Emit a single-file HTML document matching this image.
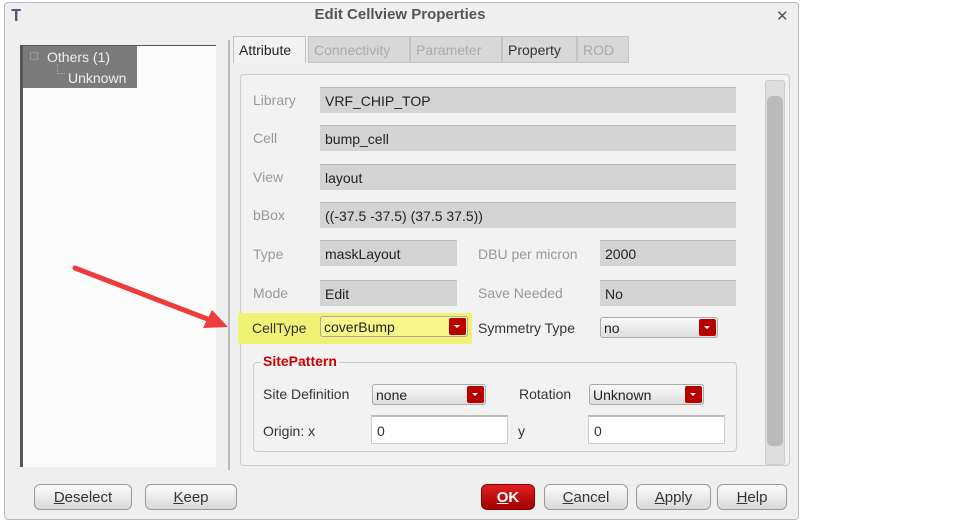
<!DOCTYPE html>
<html><head><style>
*{box-sizing:border-box;margin:0;padding:0}
body{width:963px;height:524px;background:#fff;font-family:"Liberation Sans","DejaVu Sans",sans-serif;font-size:14px;color:#333;position:relative;overflow:hidden}
.a{position:absolute}
.dlg{left:4px;top:2px;width:795px;height:518px;background:#efefef;border:1px solid #bbb;border-radius:4px}
.lbl{position:absolute;color:#999;font-size:14px}
.lbl.d{color:#333}
.fld{position:absolute;background:#d4d4d4;border-top:1px solid #bbb;height:26px;padding:5px 5px;font-size:14px;color:#222}
.inp{position:absolute;background:#fff;border:1px solid #ccc;border-top:2px solid #bbb;height:29px;padding:6px 5px;font-size:14px}
.dd{position:absolute;height:21px;background:linear-gradient(#fafafa,#ddd);border:1px solid #aaa;border-radius:3px;padding:2px 3px;font-size:14px;color:#222}
.dd b{position:absolute;right:1px;top:1px;width:17px;height:17px;background:#b80000;border-radius:2px}
.dd b:after{content:"";position:absolute;left:5px;top:7px;border:3px solid transparent;border-top:3px solid #fff}
.btn{position:absolute;top:484px;height:26px;background:linear-gradient(#fdfdfd,#d8d8d8);border:1px solid #999;border-radius:6px;text-align:center;padding-top:4px;font-size:15px;color:#333}
.tab{position:absolute;top:36px;height:27px;background:#d8d8d8;border:1px solid #c4c4c4;padding:5px 5px;color:#aaa;font-size:14px}
</style></head><body>
<div class="a dlg"></div>
<div class="a" style="left:11px;top:8px;font-size:16px;color:#557;">&#x1D413;</div>
<div class="a" style="left:0;top:6px;width:800px;text-align:center;font-weight:bold;color:#555;font-size:15px">Edit Cellview Properties</div>
<div class="a" style="left:776px;top:7px;font-weight:bold;color:#555;font-size:15px">✕</div>
<!-- left panel -->
<div class="a" style="left:20px;top:45px;width:196px;height:422px;background:#fcfcfc;border-left:3px solid #555;border-top:1px solid #555"></div>
<div class="a" style="left:23px;top:46px;width:114px;height:42px;background:#7b7b7b"></div>
<div class="a" style="left:30px;top:52px;width:8px;height:8px;border:1px solid #999"></div>
<div class="a" style="left:47px;top:49px;color:#eee;font-size:14px">Others (1)</div>
<div class="a" style="left:57px;top:64px;width:8px;height:10px;border-left:1px dotted #aaa;border-bottom:1px dotted #aaa"></div>
<div class="a" style="left:68px;top:70px;color:#eee;font-size:14px">Unknown</div>
<div class="a" style="left:228px;top:40px;width:2px;height:430px;background:#bbb"></div>
<!-- tabs -->
<div class="tab" style="left:233px;width:73px;background:#f2f2f2;color:#222;border-bottom:none">Attribute</div>
<div class="tab" style="left:308px;width:102px">Connectivity</div>
<div class="tab" style="left:410px;width:92px">Parameter</div>
<div class="tab" style="left:502px;width:75px;color:#333">Property</div>
<div class="tab" style="left:577px;width:52px">ROD</div>
<div class="a" style="left:240px;top:74px;width:550px;height:392px;border:1px solid #ccc;border-radius:4px;background:#f2f2f2"></div>
<!-- scrollbar -->
<div class="a" style="left:765px;top:80px;width:20px;height:385px;background:#ddd;border:1px solid #ccc;border-radius:3px"></div>
<div class="a" style="left:767px;top:96px;width:16px;height:350px;background:#bbb;border-radius:5px"></div>
<!-- fields -->
<div class="lbl" style="left:253px;top:92px">Library</div><div class="fld" style="left:320px;top:87px;width:416px">VRF_CHIP_TOP</div>
<div class="lbl" style="left:253px;top:130px">Cell</div><div class="fld" style="left:320px;top:125px;width:416px">bump_cell</div>
<div class="lbl" style="left:253px;top:169px">View</div><div class="fld" style="left:320px;top:164px;width:416px">layout</div>
<div class="lbl" style="left:253px;top:207px">bBox</div><div class="fld" style="left:320px;top:202px;width:416px">((-37.5 -37.5) (37.5 37.5))</div>
<div class="lbl" style="left:253px;top:246px">Type</div><div class="fld" style="left:320px;top:240px;width:137px">maskLayout</div>
<div class="lbl" style="left:478px;top:246px">DBU per micron</div><div class="fld" style="left:600px;top:240px;width:136px">2000</div>
<div class="lbl" style="left:253px;top:285px">Mode</div><div class="fld" style="left:320px;top:280px;width:137px">Edit</div>
<div class="lbl" style="left:478px;top:285px">Save Needed</div><div class="fld" style="left:600px;top:280px;width:136px">No</div>
<!-- celltype -->
<div class="a" style="left:238px;top:313px;width:234px;height:31px;background:#f1f175"></div>
<div class="lbl d" style="left:252px;top:320px">CellType</div>
<div class="dd" style="left:320px;top:316px;width:148px;background:#f7f78a">coverBump<b></b></div>
<div class="lbl d" style="left:478px;top:320px">Symmetry Type</div>
<div class="dd" style="left:600px;top:317px;width:118px">no<b></b></div>
<!-- site pattern -->
<div class="a" style="left:253px;top:362px;width:484px;height:90px;border:1px solid #ccc;border-radius:4px"></div>
<div class="a" style="left:261px;top:353px;background:#f2f2f2;padding:0 2px;color:#c00;font-weight:bold;font-size:14px">SitePattern</div>
<div class="lbl d" style="left:263px;top:386px">Site Definition</div>
<div class="dd" style="left:372px;top:384px;width:114px">none<b></b></div>
<div class="lbl d" style="left:519px;top:386px">Rotation</div>
<div class="dd" style="left:589px;top:384px;width:115px">Unknown<b></b></div>
<div class="lbl d" style="left:263px;top:423px">Origin: x</div>
<div class="inp" style="left:371px;top:415px;width:137px">0</div>
<div class="lbl d" style="left:518px;top:423px">y</div>
<div class="inp" style="left:588px;top:415px;width:137px">0</div>
<!-- buttons -->
<div class="btn" style="left:34px;width:98px"><u>D</u>eselect</div>
<div class="btn" style="left:145px;width:92px"><u>K</u>eep</div>
<div class="btn" style="left:481px;width:54px;background:linear-gradient(#e02020,#a00000);color:#fff;font-weight:bold;border-color:#800"><u>O</u>K</div>
<div class="btn" style="left:544px;width:84px"><u>C</u>ancel</div>
<div class="btn" style="left:636px;width:75px"><u>A</u>pply</div>
<div class="btn" style="left:717px;width:70px"><u>H</u>elp</div>
<!-- arrow -->
<svg class="a" style="left:0;top:0" width="963" height="524"><line x1="75" y1="268" x2="210" y2="320" stroke="#ee3b3b" stroke-width="5" stroke-linecap="round"/><polygon points="228,327 203,328 212,310" fill="#ee3b3b"/></svg>
</body></html>
